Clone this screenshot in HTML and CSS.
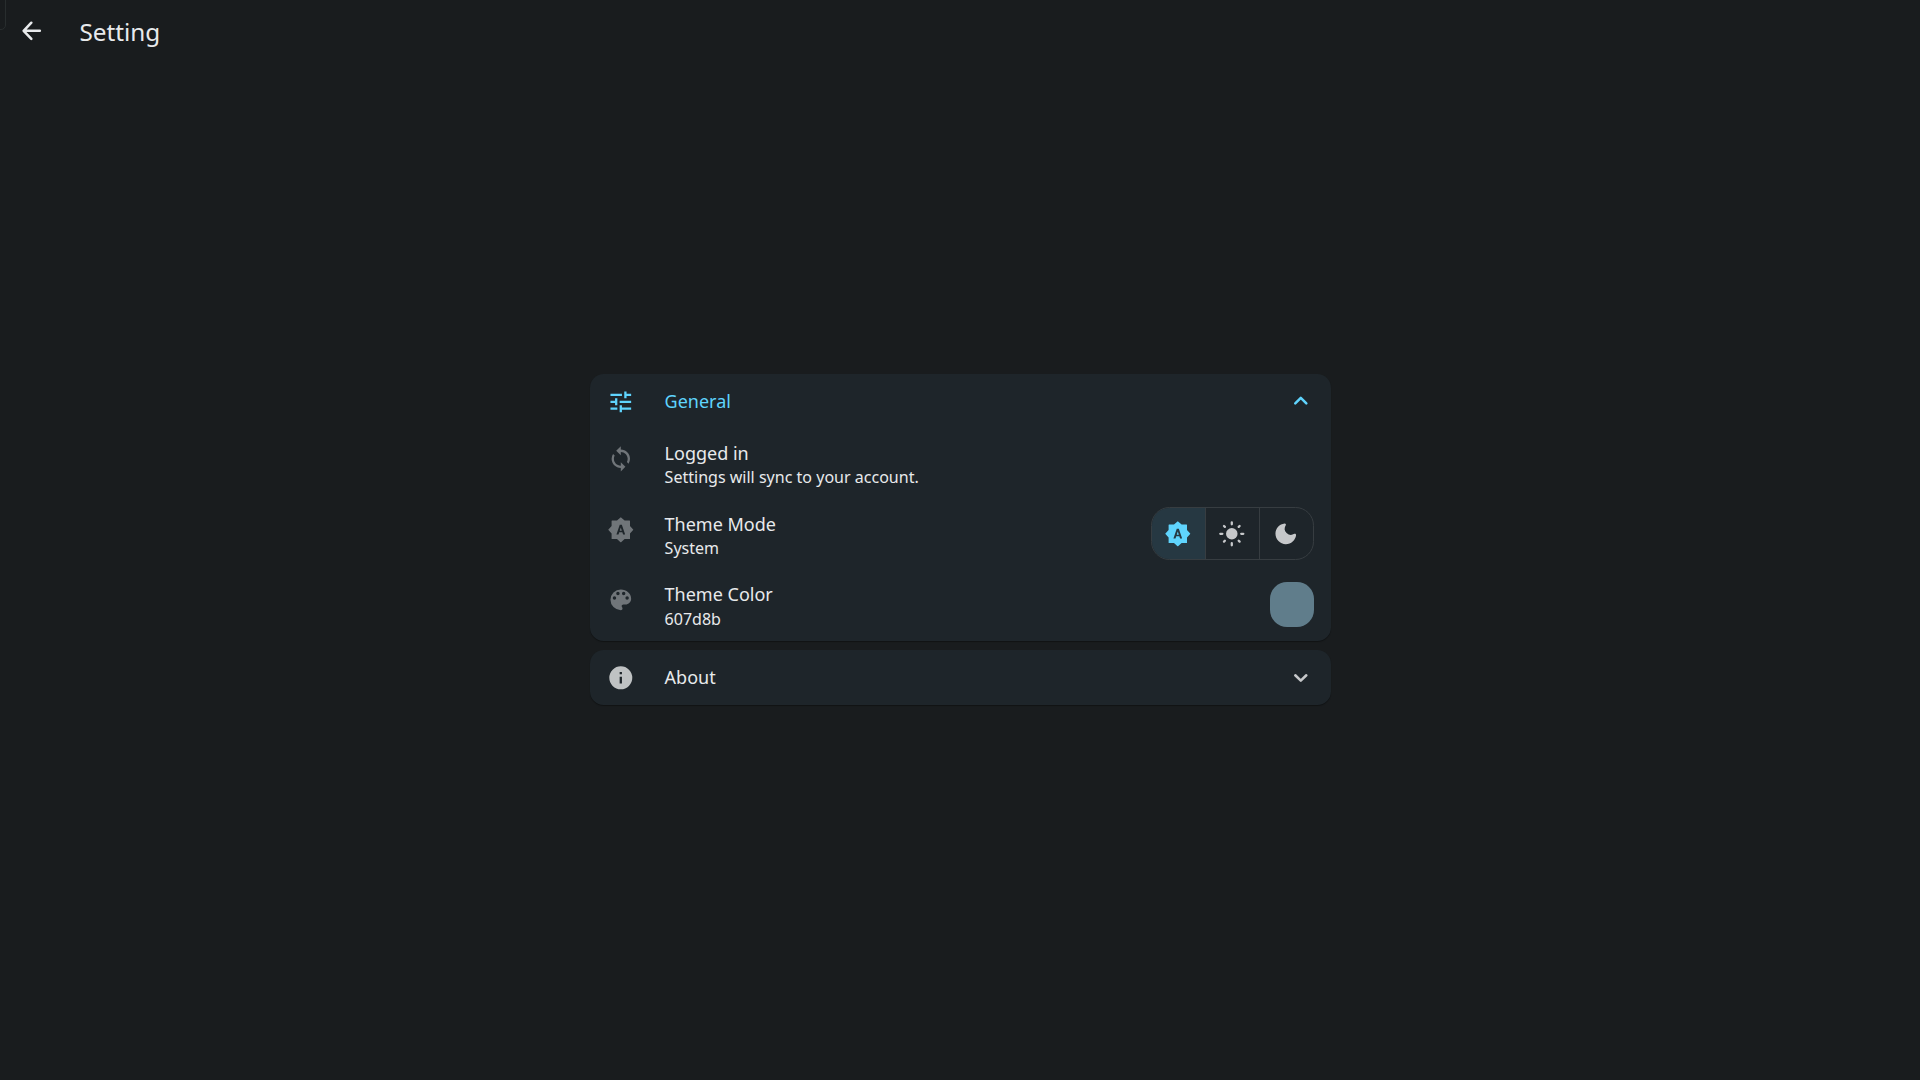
FILE: index.html
```html
<!DOCTYPE html>
<html lang="en">
<head>
<meta charset="utf-8">
<title>Setting</title>
<link rel="stylesheet" href="styles.css">
</head>
<body>
<svg class="defs" aria-hidden="true">
  <symbol id="auto" viewBox="0 0 24 24"><path fill-rule="evenodd" d="M20 8.69V4.300a.3.300 0 0 0-.3-.3h-4.390L12.250 1.250a.35.350 0 0 0-.5 0L8.690 4H4.300a.3.300 0 0 0-.3.300v4.390L1.250 11.750a.35.350 0 0 0 0 .5L4 15.310v4.390a.3.300 0 0 0 .3.300h4.390l3.060 2.750a.35.350 0 0 0 .5 0L15.310 20h4.390a.3.300 0 0 0 .3-.3v-4.390l2.750-3.060a.35.350 0 0 0 0-.5zM14 16l-.65-1.900h-2.700L10 16H8.200L11.100 7.600h1.800L15.800 16zM11.100 12.750h1.800L12 9.900z"/></symbol>
</svg>
<header class="bar">
  <span class="edge"></span>
  <svg class="icon back" viewBox="0 0 24 24"><path d="M19 12H5.2M11.6 5 4.9 12l6.7 7" fill="none" stroke="currentColor" stroke-width="2.2" stroke-linecap="round" stroke-linejoin="round"/></svg>
  <h1 class="title">Setting</h1>
</header>
<main class="page">
  <section class="card">
    <div class="head active">
      <svg class="icon" viewBox="0 0 24 24"><path d="M3 17v2h6v-2H3zM3 5v2h10V5H3zm10 16v-2h8v-2h-8v-2h-2v6h2zM7 9v2H3v2h4v2h2V9H7zm14 4v-2H11v2h10zm-6-4h2V7h4V5h-4V3h-2v6z"/></svg>
      <span class="name">General</span>
      <svg class="icon chevron" viewBox="0 0 24 24"><path d="m7.2 14.2 4.8-4.7 4.8 4.7"/></svg>
    </div>
    <div class="row">
      <svg class="icon dim" viewBox="0 0 24 24"><path d="M12 4V1L8 5l4 4V6c3.31 0 6 2.69 6 6 0 1.01-.25 1.97-.7 2.8l1.46 1.46A7.93 7.93 0 0 0 20 12c0-4.42-3.58-8-8-8zm0 14c-3.31 0-6-2.69-6-6 0-1.01.25-1.97.7-2.8L5.24 7.74A7.93 7.93 0 0 0 4 12c0 4.42 3.58 8 8 8v3l4-4-4-4v3z"/></svg>
      <div class="text"><div class="label">Logged in</div><div class="sub">Settings will sync to your account.</div></div>
    </div>
    <div class="row">
      <svg class="icon dim"><use href="#auto"/></svg>
      <div class="text"><div class="label">Theme Mode</div><div class="sub">System</div></div>
      <div class="modes">
        <span class="mode selected"><svg class="icon"><use href="#auto"/></svg></span>
        <span class="mode"><svg class="icon" viewBox="0 0 24 24"><circle cx="12" cy="12" r="5"/><path d="M12 2v1.800M12 20.200v1.800M2 12h1.800M20.200 12h1.800M5.200 5.200l.8.8M18 18l.8.8M5.200 18.800l.8-.8M18 6l.8-.8" stroke="currentColor" stroke-width="2" stroke-linecap="round"/></svg></span>
        <span class="mode"><svg class="icon" viewBox="0 0 24 24"><path d="M11.010 3.050C6.510 3.540 3 7.360 3 12c0 4.970 4.030 9 9 9 4.630 0 8.450-3.500 8.950-8 .09-.79-.78-1.420-1.540-.95a5.403 5.403 0 0 1-7.460-7.460c.45-.76-.13-1.630-.94-1.540z"/></svg></span>
      </div>
    </div>
    <div class="row">
      <svg class="icon dim" viewBox="0 0 24 24"><path d="M12 3a9 9 0 0 0 0 18c.83 0 1.500-.67 1.500-1.500 0-.39-.15-.74-.39-1.010-.23-.26-.38-.61-.38-.99 0-.83.67-1.500 1.500-1.500H16c2.760 0 5-2.240 5-5 0-4.420-4.030-8-9-8zm-5.500 9a1.500 1.500 0 1 1 0-3 1.500 1.500 0 0 1 0 3zm3-4a1.500 1.500 0 1 1 0-3 1.500 1.500 0 0 1 0 3zm5 0a1.500 1.500 0 1 1 0-3 1.500 1.500 0 0 1 0 3zm3 4a1.500 1.500 0 1 1 0-3 1.500 1.500 0 0 1 0 3z"/></svg>
      <div class="text"><div class="label">Theme Color</div><div class="sub">607d8b</div></div>
      <span class="swatch"></span>
    </div>
  </section>
  <section class="card">
    <div class="head">
      <svg class="icon info" viewBox="0 0 24 24"><path d="M12 2a10 10 0 1 0 0 20 10 10 0 0 0 0-20zm1 15h-2v-6h2v6zm0-8h-2V7h2v2z"/></svg>
      <span class="name">About</span>
      <svg class="icon chevron closed" viewBox="0 0 24 24"><path d="m7.2 9.800 4.800 4.700 4.800-4.700"/></svg>
    </div>
  </section>
</main>
</body>
</html>
```
FILE: styles.css
```css
* { box-sizing: border-box; }
body {
  margin: 0;
  height: 1080px;
  overflow: hidden;
  display: flex;
  flex-direction: column;
  background: #191c1e;
  color: #e8eaec;
  font-family: "Noto Sans", sans-serif;
}
.defs { position: absolute; width: 0; height: 0; }
.icon { width: 27.6px; height: 27.6px; flex: none; fill: currentColor; display: block; }
.bar { position: relative; height: 64px; display: flex; align-items: center; padding-left: 17.6px; }
.edge {
  position: absolute; left: -10px; top: -10px; width: 16px; height: 40px;
  border: 1px solid #282d2e; border-radius: 5px;
}
.back { margin-top: -2px; }
.title { margin: 0 0 0 34.2px; font-size: 24.3px; font-weight: 400; line-height: 32px; }
.page { width: 741px; margin: 310px auto 0; display: flex; flex-direction: column; gap: 9px; }
.card { background: #1e252a; border-radius: 13.8px; box-shadow: 0 1px 1px rgba(0, 0, 0, .35); }
.head { height: 55.2px; display: flex; align-items: center; padding: 0 16.2px 0 17.2px; }
.active { color: #5fd4fd; }
.name, .label { font-size: 18px; line-height: 25px; }
.name { flex: 1; margin: -1px 0 0 30.3px; }
.chevron { margin-top: -1px; }
.chevron path { fill: none; stroke: currentColor; stroke-width: 2.2; stroke-linecap: round; stroke-linejoin: round; }
.closed { margin-top: 0; color: #c6c8ca; }
.info { color: #bfc2c3; }
.row { height: 70.6px; display: flex; padding: 0 17px 0 17.2px; }
.row > .icon { margin-top: 15.8px; }
.dim { color: #707579; }
.text { flex: 1; margin-left: 30.3px; padding-top: 11.8px; }
.sub { font-size: 16.05px; line-height: 23.4px; }
.row:last-child .sub { line-height: 24px; }
.modes {
  display: flex; width: 163px; height: 53px; margin-top: 7.6px;
  border: 1px solid #373d41; border-radius: 18.4px; overflow: hidden;
}
.mode { flex: 1; display: flex; align-items: center; justify-content: center; color: #c6c8ca; }
.mode + .mode { border-left: 1px solid #373d41; }
.selected { background: #263842; color: #5fd4fd; }
.swatch { width: 44px; height: 44.4px; margin-top: 12px; border-radius: 17px; background: #607d8b; }
```
